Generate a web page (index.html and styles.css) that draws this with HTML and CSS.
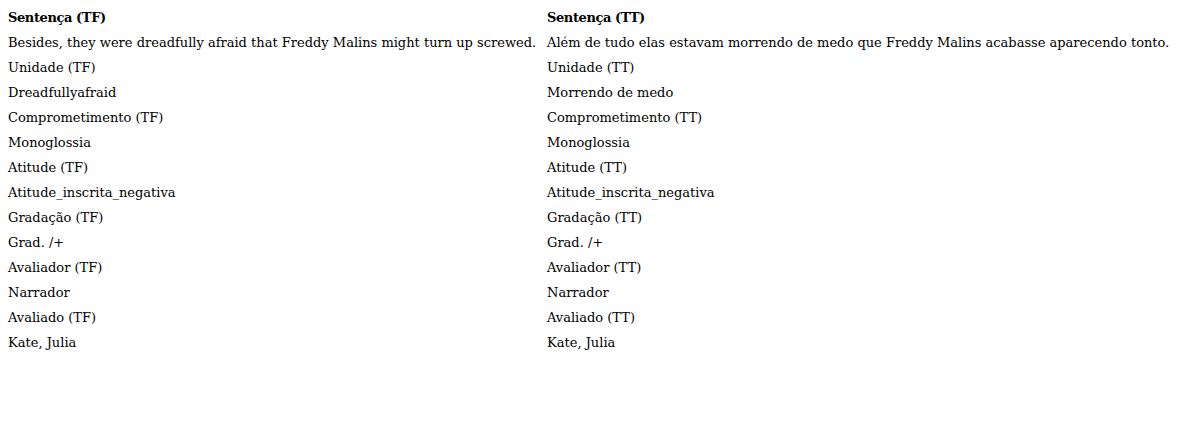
FILE: index.html
```html
<!DOCTYPE html>
<html><head><meta charset="utf-8"><link rel="stylesheet" href="styles.css"></head>
<body>
<div class="sheet">
  <div class="cell head">Sentença (TF)</div><div class="cell head">Sentença (TT)</div>
  <div class="cell">Besides, they were dreadfully afraid that Freddy Malins might turn up screwed.</div><div class="cell">Além de tudo elas estavam morrendo de medo que Freddy Malins acabasse aparecendo tonto.</div>
  <div class="cell">Unidade (TF)</div><div class="cell">Unidade (TT)</div>
  <div class="cell">Dreadfullyafraid</div><div class="cell">Morrendo de medo</div>
  <div class="cell">Comprometimento (TF)</div><div class="cell">Comprometimento (TT)</div>
  <div class="cell">Monoglossia</div><div class="cell">Monoglossia</div>
  <div class="cell">Atitude (TF)</div><div class="cell">Atitude (TT)</div>
  <div class="cell">Atitude_inscrita_negativa</div><div class="cell">Atitude_inscrita_negativa</div>
  <div class="cell">Gradação (TF)</div><div class="cell">Gradação (TT)</div>
  <div class="cell">Grad. /+</div><div class="cell">Grad. /+</div>
  <div class="cell">Avaliador (TF)</div><div class="cell">Avaliador (TT)</div>
  <div class="cell">Narrador</div><div class="cell">Narrador</div>
  <div class="cell">Avaliado (TF)</div><div class="cell">Avaliado (TT)</div>
  <div class="cell">Kate, Julia</div><div class="cell">Kate, Julia</div>
</div>
</body></html>
```
FILE: styles.css
```css
html,body{margin:0;background:#fff}
body{font-family:"DejaVu Serif",serif;font-size:13px;color:#000}
.sheet{display:grid;grid-template-columns:539px auto;justify-content:start;padding:5px 0 0 8px}
.cell{line-height:25px;height:25px;white-space:nowrap}
.head{font-weight:bold;letter-spacing:-0.4px}
```
